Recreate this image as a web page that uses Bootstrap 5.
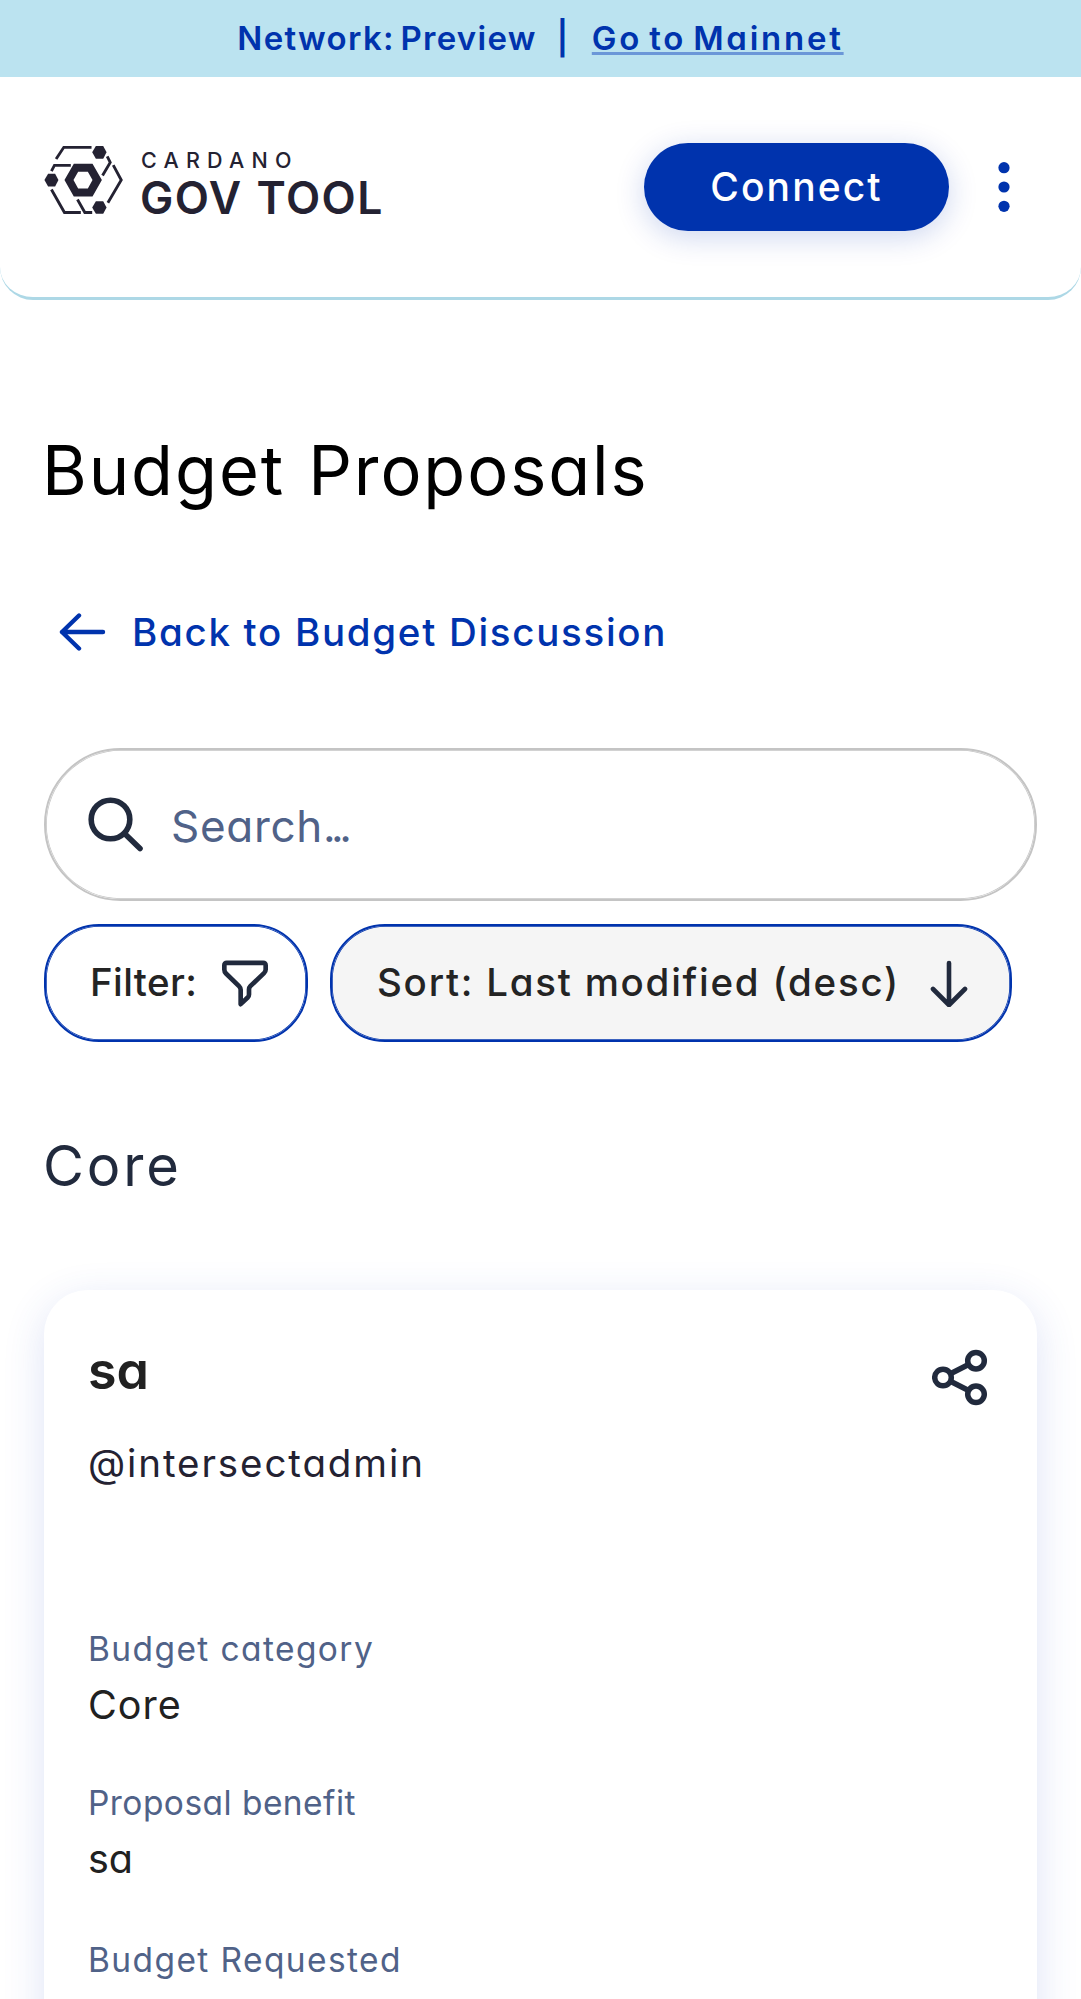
<!DOCTYPE html>
<html lang="en">
<head>
<meta charset="utf-8">
<meta name="viewport" content="width=device-width, initial-scale=1">
<title>Budget Proposals</title>
<link href="https://cdn.jsdelivr.net/npm/bootstrap@5.3.0/dist/css/bootstrap.min.css" rel="stylesheet">
<style>
body{font-family:Inter,"Open Sans",sans-serif;font-feature-settings:"cv11";background:#fff;color:#212121;height:1999px;overflow:hidden}
.net-bar{height:77px;background:#bbe3f0;color:#0033ad;font-size:33px;font-weight:600;letter-spacing:1.3px;word-spacing:-4px}
.net-bar .sep{width:55px;letter-spacing:0;padding-right:4px}
.net-bar a{color:#0033ad;letter-spacing:2.75px;text-decoration:underline;text-decoration-color:#6b97d8;text-decoration-thickness:3px;text-underline-offset:2px}
.top-nav{height:223px;padding:0 71px 1px 44px;border-bottom:3px solid #add8e6;border-radius:0 0 33px 33px}
.lockup{height:68px;margin-bottom:13px;color:#242232}
.lockup svg{margin-top:-1px}
.lk-text{margin-left:18px}
.lk-a{font-size:21.5px;line-height:26px;font-weight:500;letter-spacing:7.2px;margin-top:1px}
.lk-b{font-size:44.5px;line-height:44px;font-weight:600;margin:3px 0 0 -1px;letter-spacing:1.5px;word-spacing:1px}
.btn-connect,.btn-connect:hover{width:305px;height:88px;background:#0033ad;color:#fff;font-size:39px;font-weight:500;letter-spacing:2.1px;box-shadow:0 6px 30px rgba(0,51,173,.2);margin-right:49px;padding-top:8px}
.page{padding:131px 44px 0}
.page h1{font-size:68.5px;line-height:80px;font-weight:400;color:#000;letter-spacing:1.9px;word-spacing:2px;margin:0 0 97px -2px}
.back{font-size:38.5px;line-height:48px;font-weight:500;color:#0033ad;letter-spacing:1.7px;padding-left:15px;margin-bottom:92px;gap:26px}
.search-box{height:153px;border:2px solid #c4c4c4;box-shadow:inset 0 0 0 .75px #c4c4c4;font-size:44px;letter-spacing:.7px;color:#506288;padding:2px 0 0 41px;gap:28px}
.search-box .dots{letter-spacing:-4.6px}
.tools{margin-top:23px;gap:22px}
.pill{height:118px;border:2px solid #0033ad;box-shadow:inset 0 0 0 .75px #0033ad;border-radius:55px;font-size:38.5px;font-weight:500;color:#242424;background:#fff}
.pill-filter{width:264px;padding:0 38px 0 44px;letter-spacing:.4px}
.pill-sort{width:682px;padding:0 42px 0 45px;letter-spacing:1.75px;background:#f5f5f5}
.sec{font-size:56px;line-height:66px;font-weight:400;color:#212a3d;letter-spacing:2.9px;margin:91px 0 91px -1px}
.prop{height:800px;border-radius:44px;background:#fff;box-shadow:0 11px 42px rgba(47,80,200,.16);padding:51px 46px 0 44px}
.prop h3{font-size:52px;line-height:60px;font-weight:600;letter-spacing:0;margin:0}
.share{margin-top:8px;margin-right:3px}
.who{font-size:38.5px;line-height:48px;color:#242232;letter-spacing:1.9px;margin:33px 0 142px}
.lbl{font-size:33.5px;line-height:40px;color:#506288;letter-spacing:1.4px}
.lbl.tight{letter-spacing:.45px}
.val{font-size:39.5px;line-height:48px;letter-spacing:1px;margin:12px 0 54px}
.val.low{letter-spacing:0;margin:12px 0 57px}
</style>
<script src="https://cdn.jsdelivr.net/npm/bootstrap@5.3.0/dist/js/bootstrap.bundle.min.js"></script>
</head>
<body>
<div class="net-bar d-flex align-items-center justify-content-center"><span>Network: Preview</span><span class="sep text-center">|</span><a href="#">Go to Mainnet</a></div>
<header class="top-nav d-flex align-items-center">
  <div class="lockup d-flex me-auto">
    <svg width="79" height="69.5" viewBox="12 15 236 208" fill="none" stroke="#242232" stroke-width="8.500">
      <path d="M48 57 71 22H154M34 93 43 76H92M201 49 210 67 187 106M219 75 243 120 203 188M34 148 73 217H122M112 178 134 217H156"/>
      <g fill="#242232" stroke="none">
        <path d="M156 37 167 18H189L199 37 189 56H167Z"/>
        <path d="M13 120 24 101H45L55 120 45 139H24Z"/>
        <path d="M156 202 167 183H189L199 202 189 221H167Z"/>
        <path fill-rule="evenodd" d="M73 120 101 71H157L185 120 157 169H101ZM100 120 114 145H143L157 120 143 95H114Z"/>
      </g>
    </svg>
    <div class="lk-text"><div class="lk-a">CARDANO</div><div class="lk-b">GOV TOOL</div></div>
  </div>
  <button class="btn btn-connect rounded-pill">Connect</button>
  <svg width="12" height="50" viewBox="0 0 12 50" fill="#0033ad"><circle cx="6" cy="5.7" r="5.6"/><circle cx="6" cy="25" r="5.6"/><circle cx="6" cy="44.3" r="5.6"/></svg>
</header>
<main class="page">
  <h1>Budget Proposals</h1>
  <div class="back d-flex align-items-center">
    <svg width="47" height="38" viewBox="0 0 47 38" fill="none" stroke="#0033ad" stroke-width="4.4" stroke-linecap="round" stroke-linejoin="round"><path d="M44 19H3M20 2.5 3 19 20 35.500"/></svg>
    <span>Back to Budget Discussion</span>
  </div>
  <div class="search-box rounded-pill d-flex align-items-center">
    <svg width="56" height="58" viewBox="0 0 56 58" fill="none" stroke="#212a3d" stroke-width="5.6" stroke-linecap="round"><circle cx="23.500" cy="22.500" r="19.300"/><path d="M37.500 36.500 53 51.500"/></svg>
    <span>Search<span class="dots">...</span></span>
  </div>
  <div class="tools d-flex">
    <div class="pill pill-filter d-flex align-items-center justify-content-between"><span>Filter:</span>
      <svg width="46" height="47" viewBox="21 33 138 140" fill="none" stroke="#212a3d" stroke-width="14" stroke-linejoin="round"><path d="M35 41H145a7 7 0 0 1 7 7V61Q152 67 147 72L106 111Q102 115 102 121V136Q102 141 98 145L77 165V122Q77 116 72 111L33 73Q28 68 28 61V48a7 7 0 0 1 7-7Z"/></svg>
    </div>
    <div class="pill pill-sort d-flex align-items-center justify-content-between"><span>Sort: Last modified (desc)</span>
      <svg width="38" height="48" viewBox="0 0 38 48" fill="none" stroke="#212a3d" stroke-width="4.6" stroke-linecap="round" stroke-linejoin="round"><path d="M19 4V46M3 30 19 46 35 30"/></svg>
    </div>
  </div>
  <h2 class="sec">Core</h2>
  <article class="prop">
    <div class="d-flex justify-content-between"><h3>sa</h3>
      <svg class="share" width="56" height="57" viewBox="0 0 56 57" fill="none" stroke="#212a3d" stroke-width="5.500"><circle cx="11" cy="28.500" r="8.300"/><circle cx="44" cy="11.700" r="8.300"/><circle cx="44" cy="45.300" r="8.300"/><path d="M18.400 24.700 36.600 15.500M18.400 32.300 36.600 41.500"/></svg>
    </div>
    <div class="who">@intersectadmin</div>
    <div class="lbl">Budget category</div><div class="val">Core</div>
    <div class="lbl tight">Proposal benefit</div><div class="val low">sa</div>
    <div class="lbl">Budget Requested</div>
  </article>
</main>
</body>
</html>
